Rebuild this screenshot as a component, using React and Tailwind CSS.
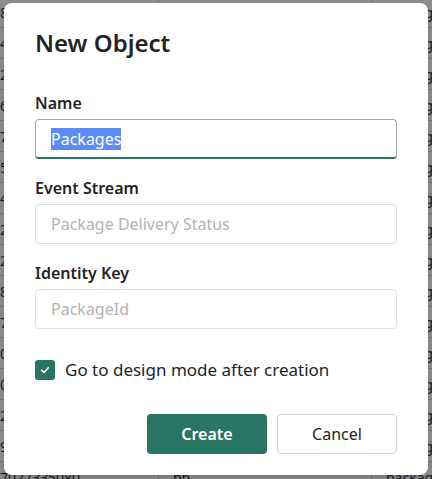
const rows = [
  ['8015552231', 'aa', 'package-1031'],
  ['4255550178', 'bb', 'package-1032'],
  ['2065550143', 'cc', 'package-1033'],
  ['6465550199', 'aa', 'package-1034'],
  ['7185550120', 'dd', 'package-1035'],
  ['5035550182', 'bb', 'package-1036'],
  ['4155550111', 'cc', 'package-1037'],
  ['2125550165', 'aa', 'package-1038'],
  ['2535550107', 'dd', 'package-1039'],
  ['8585550130', 'bb', 'package-1040'],
  ['7735550149', 'cc', 'package-1041'],
  ['0125550176', 'aa', 'package-1042'],
  ['0335550190', 'dd', 'package-1043'],
  ['2145550123', 'bb', 'package-1044'],
  ['9165550158', 'cc', 'package-1045'],
  ['7027335080', 'bb', 'package-1046'],
];

const Field = ({ label, children }) => (
  <div className="flex flex-col">
    <span className="text-[16px] leading-6 font-semibold text-[#242424]">{label}</span>
    <div className="mt-[4px]">{children}</div>
  </div>
);

const App = () => {
  return (
    <div className="relative w-[432px] h-[479px] overflow-hidden bg-white" style={{ fontFamily: '"Noto Sans", "Open Sans", sans-serif' }}>
      {/* table behind the dialog */}
      <div className="-mt-[3px] flex flex-col">
        {rows.map((r, i) => (
          <div key={i} className="h-[31px] flex items-center border-b border-[#d6d6d6] text-[14px] text-[#2b3a55]">
            <span className="w-[158px] shrink-0">{r[0]}</span>
            <span className="w-[213px] shrink-0 h-full flex items-center pl-[14px] border-l border-[#d6d6d6]">{r[1]}</span>
            <span className="flex-1 h-full flex items-center pl-[14px] border-l border-[#d6d6d6] whitespace-nowrap">{r[2]}</span>
          </div>
        ))}
      </div>

      {/* overlay */}
      <div className="absolute inset-0 bg-black/45"></div>

      {/* dialog */}
      <div className="absolute left-[4px] top-[3px] w-[424px] h-[472px] bg-white rounded-[8px] shadow-lg px-[31px] pt-[24px]">
        <h2 className="text-[24px] leading-8 font-semibold text-[#242424]">New Object</h2>

        <div className="mt-[32px] flex flex-col gap-[17px]">
          <Field label="Name">
            <div className="h-[40px] rounded-[4px] border border-[#a8a8a8] border-b-2 border-b-[#287563] flex items-center px-[15px] text-[16px]">
              <span className="bg-[#5b8cf6] text-white leading-[22px]">Packages</span>
            </div>
          </Field>
          <Field label="Event Stream">
            <div className="h-[40px] rounded-[4px] border border-[#e0e0e0] flex items-center px-[15px] text-[16px] text-[#b3b3b3]">
              Package Delivery Status
            </div>
          </Field>
          <Field label="Identity Key">
            <div className="h-[40px] rounded-[4px] border border-[#e0e0e0] flex items-center px-[15px] text-[16px] text-[#b3b3b3]">
              PackageId
            </div>
          </Field>
        </div>

        <div className="mt-[29px] h-[24px] flex items-center gap-[10px]">
          <div className="w-[20px] h-[20px] rounded-[3px] bg-[#287563] flex items-center justify-center">
            <svg width="12" height="12" viewBox="0 0 12 12" fill="none">
              <path d="M2.5 6.2 L5 8.5 L9.5 3.5" stroke="white" strokeWidth="1.6" strokeLinecap="round" strokeLinejoin="round" />
            </svg>
          </div>
          <span className="text-[17px] text-[#242424]">Go to design mode after creation</span>
        </div>

        <div className="mt-[32px] flex justify-end gap-[10px]">
          <button className="w-[120px] h-[40px] rounded-[4px] bg-[#287563] text-white text-[16px] font-semibold">Create</button>
          <button className="w-[120px] h-[40px] rounded-[4px] border border-[#d1d1d1] bg-white text-[#242424] text-[16px]">Cancel</button>
        </div>
      </div>
    </div>
  );
};

export default App;
